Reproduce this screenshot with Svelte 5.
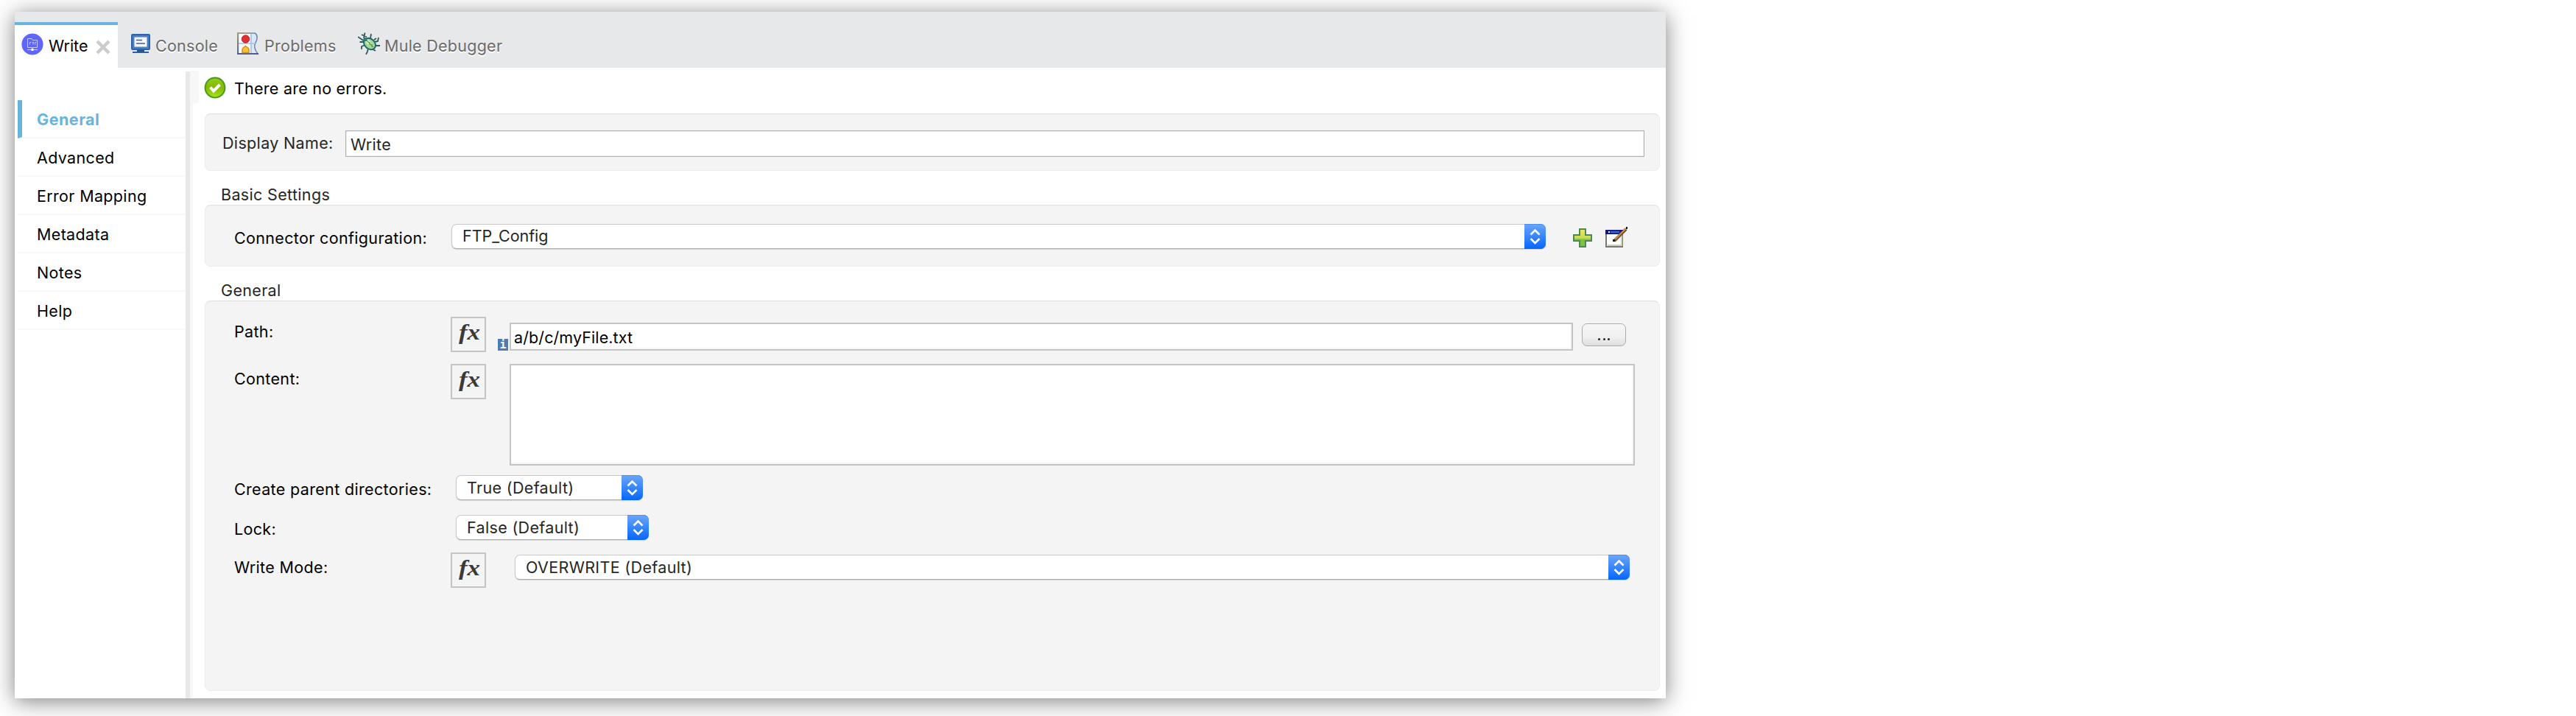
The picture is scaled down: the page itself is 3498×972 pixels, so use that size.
<script>
  const nav = ['General', 'Advanced', 'Error Mapping', 'Metadata', 'Notes', 'Help'];
</script>

{#snippet stepper()}
  <span class="stepper">
    <svg viewBox="0 0 29 34" width="29" height="34"><path d="M8.500 14.500 14.500 8.500l6 6M8.500 20l6 6 6-6" fill="none" stroke="#fff" stroke-width="2.600" /></svg>
  </span>
{/snippet}

{#snippet fx()}
  <button class="fx"><i>fx</i></button>
{/snippet}

<main class="page">
  <div class="win">
    <div class="tabs">
      <div class="tab active">
        <svg class="ico-w" width="30" height="30" viewBox="0 0 30 30"><circle cx="15" cy="15" r="14.600" fill="#5f66fb" /><g fill="none" stroke="#c9cbfe" stroke-width="1"><path d="M8.500 19.500V7.500H14l1.500 2h6v10zM15 19.500v2M8 22.500h14" /><path d="M11.500 15.500v-3h2M15 12.500h2M16 12.500v3M18.500 15.500v-3h1.500" /></g><rect x="13.500" y="21" width="3" height="3" fill="#fff" /></svg>
        <span class="t">Write</span>
        <svg class="close" width="20" height="20" viewBox="0 0 20 20"><path d="M2 2l16 16M18 2 2 18" stroke="#ccc" stroke-width="4.400" /></svg>
      </div>
      <div class="tab console">
        <svg width="26" height="26" viewBox="0 0 26 26"><rect x="1" y="1" width="24" height="20" rx="1" fill="#4f7fc0" stroke="#2b62ae" stroke-width="2" /><rect x="4.500" y="4.500" width="17" height="13" fill="#f5f9fe" /><path d="M7 8.500h8M7 13h12" stroke="#47598f" stroke-width="1.600" /><path d="M8 22h10v2H8z" fill="#23508f" /><path d="M2 24h22v2H2z" fill="#2b5fa8" /></svg>
        <span class="t">Console</span>
      </div>
      <div class="tab problems">
        <svg width="30" height="30" viewBox="0 0 30 30"><defs><linearGradient id="pb" x1="0" y1="0" x2="0" y2="1"><stop offset="0" stop-color="#b09a5c" /><stop offset="1" stop-color="#55648f" /></linearGradient></defs><path d="M1 1h23c4 2 4 8 1 13s0 11 3 15H1z" fill="#d9e9fb" stroke="#7488b0" stroke-width="1.600" /><path d="M3 2h15v26H3z" fill="#f8fbff" /><path d="M2 15h23M19 2v26" stroke="#a9bfe0" stroke-width="1.500" /><rect x="0" y="0" width="2" height="30" fill="url(#pb)" /><path d="M0 1h20" stroke="#b3a16c" stroke-width="1.500" /><path d="M0 29h29" stroke="#4d5f90" stroke-width="2" /><circle cx="11.500" cy="9" r="5.200" fill="#e02f35" stroke="#b3202a" /><path d="M7 27.500v-4c0-3 2.500-3 4.500-5 2 2 4.500 2 4.500 5v4z" fill="#fbc437" stroke="#d98a1d" stroke-width="1.500" /></svg>
        <span class="t">Problems</span>
      </div>
      <div class="tab debugger">
        <svg width="30" height="30" viewBox="0 0 30 30"><path d="M8 8 9.500 0.500M12 6 5 3M9 12 0 6M9 13H2.500M10 17l-5 2v4M14 21l-1 5-2 4M20 23l4 2M23 18h7M22 13l5-1 1-5M17 8l1-6M22 10l3-2" fill="none" stroke="#2e5a57" stroke-width="1.800" /><ellipse cx="16" cy="15.500" rx="8.800" ry="6.800" transform="rotate(42 16 15.500)" fill="#a9d79a" stroke="#1d6a70" stroke-width="2" /><ellipse cx="14.500" cy="13.500" rx="4" ry="2.500" transform="rotate(42 14.500 13.500)" fill="#dcf2c8" /><path d="M12 11l9 9M16 13v4M19 16v4" stroke="#5f9f4c" stroke-width="1.300" /><circle cx="10" cy="9.500" r="2.600" fill="#2f7a7c" /></svg>
        <span class="t">Mule Debugger</span>
      </div>
    </div>
    <div class="body">
      <nav>
        {#each nav as label, i}
          <div class="item" class:sel={i === 0}><span class="t">{label}</span></div>
        {/each}
      </nav>
      <div class="divider"></div>
      <div class="gutter"><span></span></div>
      <section class="content">
        <div class="status">
          <svg width="30" height="30" viewBox="0 0 30 30"><defs><linearGradient id="ok" x1="0" y1="0" x2="0" y2="1"><stop offset="0" stop-color="#8fd01c" /><stop offset=".5" stop-color="#84b800" /><stop offset="1" stop-color="#a8e61c" /></linearGradient></defs><circle cx="15" cy="15" r="13.400" fill="url(#ok)" stroke="#4c9a1c" stroke-width="2" /><path d="M8.500 14.500l4.500 5 8.500-8.500" fill="none" stroke="#fff" stroke-width="4" /></svg>
          <span class="t">There are no errors.</span>
        </div>
        <div class="panel name">
          <span class="t cap">Display Name:</span>
          <div class="input thin"><span class="t">Write</span></div>
        </div>
        <h2><span class="t">Basic Settings</span></h2>
        <div class="panel basic">
          <span class="lab t">Connector configuration:</span>
          <div class="select"><span class="t config">FTP_Config</span>{@render stepper()}</div>
          <svg class="plus" width="26" height="26" viewBox="0 0 26 26"><defs><linearGradient id="pl" x1="0" y1="0" x2="0" y2="1"><stop offset="0" stop-color="#f0e860" /><stop offset=".5" stop-color="#c8da55" /><stop offset=".6" stop-color="#7fc241" /><stop offset="1" stop-color="#7cc243" /></linearGradient></defs><path d="M9 1h8v8h8v8h-8v8H9v-8H1V9h8z" fill="url(#pl)" stroke="#4c8a55" stroke-width="2" /></svg>
          <svg class="edit" width="30" height="30" viewBox="0 0 30 30"><rect x="1" y="6" width="22" height="22" fill="#fff" stroke="#777" stroke-width="2" /><path d="M3 26h19V11" fill="none" stroke="#d0cfae" stroke-width="2" /><path d="M0 5h24v6H0z" fill="#14148c" /><path d="M7 8h12" stroke="#2d6cc0" stroke-width="2.500" /><path d="M4 7h2v2H4z" fill="#fff" /><path d="M12 20 28 4" stroke="#6b4a3c" stroke-width="4" /><path d="M13 18 28 3" stroke="#c99344" stroke-width="2" /><path d="M10 18h3v3h-3zM28 1h2v3h-2z" fill="#1a1414" /></svg>
        </div>
        <h2><span class="t">General</span></h2>
        <div class="panel general">
          <div class="row path">
            <span class="lab t">Path:</span>{@render fx()}
            <span class="info">i</span>
            <div class="input"><span class="t tight">a/b/c/myFile.txt</span></div>
            <button class="browse" aria-label="Browse"><b></b><b></b><b></b></button>
          </div>
          <div class="row cont">
            <span class="lab t">Content:</span>{@render fx()}
            <div class="input area"></div>
          </div>
          <div class="row create">
            <span class="lab t">Create parent directories:</span>
            <div class="select"><span class="t">True (Default)</span>{@render stepper()}</div>
          </div>
          <div class="row lock">
            <span class="lab t">Lock:</span>
            <div class="select"><span class="t">False (Default)</span>{@render stepper()}</div>
          </div>
          <div class="row mode">
            <span class="lab t">Write Mode:</span>{@render fx()}
            <div class="select"><span class="t">OVERWRITE (Default)</span>{@render stepper()}</div>
          </div>
        </div>
      </section>
    </div>
  </div>
</main>

<style>
  :global(body) { margin: 0; background: #fff; }
  .page, .page :global(*) { box-sizing: border-box; }
  .page { height: 972px; padding: 16px 20px 24px; overflow: hidden; display: flex; font: 21.5px/26px Inter, "Liberation Sans", sans-serif; color: #000; }
  .win { width: 2242px; height: 932px; background: #fff; box-shadow: 0 4px 28px rgba(0, 0, 0, .5); display: flex; flex-direction: column; flex: none; }
  .t { white-space: nowrap; flex: none; letter-spacing: .34px; }
  .t.tight { letter-spacing: .1px; }
  .t.config { letter-spacing: -.05px; }
  svg { flex: none; display: block; }
  .tabs { height: 76px; background: #e7e8ea; display: flex; padding-top: 14px; }
  .tab { display: flex; align-items: flex-start; color: #6b6b6b; padding-top: 14px; text-shadow: 0 2px 0 #fff; }
  .tab .t { margin-top: 5px; letter-spacing: .26px; }
  .active { width: 140px; background: #fff; border-top: 4px solid #67b5de; color: #000; padding: 11px 0 0 9px; text-shadow: none; }
  .active .t { margin: 4px 0 0 7px; width: 54px; letter-spacing: 0; }
  .close { margin: 9px 0 0 10px; }
  .console { padding: 16px 0 0 18px; width: 162px; }
  .console .t { margin: 3px 0 0 7px; }
  .problems { width: 164px; }
  .problems .t { margin-left: 7px; }
  .debugger .t { margin-left: 6px; }
  .body { flex: 1; display: flex; }
  nav { width: 232px; padding: 44px 1px 0 4px; }
  .item { height: 52px; border-bottom: 2px solid #f7f7f7; padding: 13px 0 0 26px; display: flex; }
  .sel { border-left: 6px solid #67b5de; padding-left: 20px; color: #67b5de; font-weight: 700; }
  .sel .t { letter-spacing: .5px; }
  .divider { width: 6px; background: #e7e8ea; margin-top: 5px; }
  .gutter { width: 12px; margin-top: 4px; border-left: 4px solid #f7f7f7; }
  .gutter span { display: block; height: 44px; background: #f7f7f7; }
  .content { flex: 1; padding: 12px 8px 0 8px; }
  .status { display: flex; height: 50px; margin-left: -1px; }
  .status .t { margin: 3px 0 0 11px; letter-spacing: .24px; }
  .panel { background: #f4f4f4; border: 1px solid #ececec; border-top-color: #dfdfdf; border-radius: 8px; display: flex; color: #000; }
  .name { height: 78px; padding: 22px 20px 0 23px; color: #262626; }
  .name .cap { margin-top: 4px; width: 167px; }
  .input { background: #fff; border: 2px solid #c4c4c4; box-shadow: inset -2px -2px 0 #f7f7f7; display: flex; }
  .thin { border: 1px solid #b0b0b0; box-shadow: inset 0 0 0 1px #f0f0f0; height: 36px; flex: 1; padding: 5px 0 0 6px; }
  h2 { font: inherit; margin: 0; color: #262626; display: flex; padding: 19px 0 0 22px; height: 46px; }
  .basic { height: 84px; padding: 25px 0 0 39px; }
  .lab { width: 294px; }
  .basic .lab { width: 295px; margin-top: 6px; }
  .select { height: 34px; background: #fff; border: 1px solid #c8c8c8; border-bottom-color: #aaa; border-radius: 7px; box-shadow: 0 1px 1px rgba(0, 0, 0, .12); display: flex; justify-content: space-between; color: #262626; padding: 2px 0 0 14px; }
  .row .select .t { margin-top: 1px; }
  .stepper { width: 29px; height: 34px; margin: -3px -1px 0 0; border-radius: 0 7px 7px 0; background: linear-gradient(#6ba6fb, #0566ff); box-shadow: inset 0 1px 0 #4f8ff0; flex: none; }
  .basic .select { width: 1486px; }
  .plus { margin: 6px 0 0 37px; }
  .edit { margin: 3px 0 0 18px; }
  .general { height: 530px; flex-direction: column; padding: 21px 0 0 39px; }
  .row { display: flex; align-items: flex-start; }
  .fx { width: 48px; height: 48px; border: 2px solid #c4c4c4; background: #f4f4f4; padding: 0; margin: 0; font: italic 700 29px/32px "Liberation Serif", serif; color: #3a3a3a; flex: none; display: flex; }
  .fx i { display: block; margin: 3px 0 0 9px; transform: scaleX(1.200); transform-origin: 0 0; }
  .path { height: 64px; }
  .path .lab { margin-top: 7px; }
  .info { width: 14px; height: 16px; margin: 30px 2px 0 16px; background: #4a7db3; color: #fff; font: 700 15px/16px "DejaVu Sans Mono", monospace; text-align: center; flex: none; }
  .path .input { width: 1444px; height: 38px; margin-top: 8px; padding: 5px 0 0 4px; }
  .browse { width: 60px; height: 31px; margin: 9px 0 0 12px; border: 1.500px solid #adadad; border-radius: 7px; background: linear-gradient(#f6f6f6, #f0f0f0 60%, #dedede); padding: 12px 0 0; display: flex; justify-content: center; align-items: center; gap: 3.500px; }
  .browse b { width: 3px; height: 3px; background: #222; border-radius: 50%; }
  .cont { height: 151px; }
  .cont .lab { margin-top: 7px; }
  .area { width: 1528px; height: 138px; margin-left: 32px; }
  .create { height: 54px; }
  .lock { height: 51px; }
  .create .lab, .lock .lab { width: 301px; margin-top: 6px; }
  .create .select { width: 254px; }
  .lock .select { width: 262px; }
  .mode .lab { margin-top: 7px; }
  .mode .select { width: 1514px; margin: 3px 0 0 39px; }
</style>
